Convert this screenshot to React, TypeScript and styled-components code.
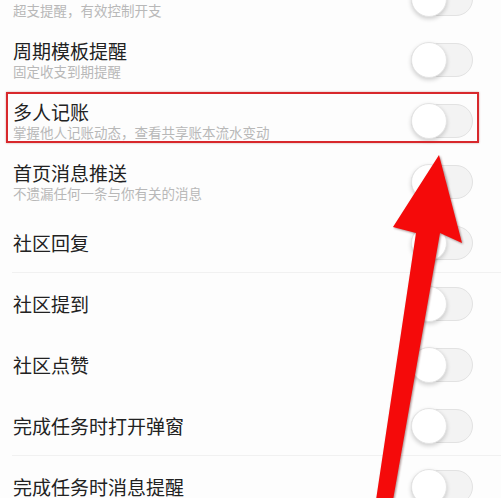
import React from 'react';
import styled, { createGlobalStyle, css } from 'styled-components';

const GlobalStyle = createGlobalStyle`
  html, body {
    margin: 0;
    padding: 0;
    background: #fdfdfd;
    overflow: hidden;
  }
  body {
    font-family: "Noto Sans CJK SC", "Noto Sans", sans-serif;
  }
`;

const Page = styled.div`
  position: relative;
  width: 501px;
  height: 498px;
  overflow: hidden;
  background: #fdfdfd;
`;

const List = styled.div`
  display: flex;
  flex-direction: column;
  margin-top: -32px;
`;

const Row = styled.div<{ $highlight?: boolean; $divider?: boolean }>`
  position: relative;
  height: 61px;
  box-sizing: border-box;
  padding: 0 28px 0 13px;
  display: flex;
  align-items: center;
  justify-content: space-between;
  ${(p) =>
    p.$divider &&
    css`
      &::before {
        content: '';
        position: absolute;
        left: 12px;
        right: 0;
        bottom: 0;
        height: 1px;
        background: #f1f1f1;
      }
    `}
  ${(p) =>
    p.$highlight &&
    css`
      &::after {
        content: '';
        position: absolute;
        left: 6px;
        right: 22px;
        top: 2px;
        bottom: 8px;
        border: 2px solid #d8282c;
        box-shadow: 0 0 2px rgba(120, 0, 0, 0.35);
      }
    `}
`;

const Texts = styled.div`
  display: flex;
  flex-direction: column;
  gap: 1.5px;
`;

const Title = styled.div`
  font-size: 19px;
  line-height: 22px;
  color: #222;
`;

const Sub = styled.div`
  font-size: 13.5px;
  line-height: 16px;
  color: #b8b8b8;
`;

const Track = styled.div`
  position: relative;
  width: 62px;
  height: 34px;
  box-sizing: border-box;
  border-radius: 17px;
  background: #f3f3f3;
  border: 1px solid #e2e2e2;
`;

const Knob = styled.div`
  position: absolute;
  left: -1px;
  top: -2px;
  width: 36px;
  height: 36px;
  border-radius: 50%;
  background: #fff;
  border: 1px solid #e4e4e4;
  box-sizing: border-box;
  box-shadow: 0 2px 4px rgba(0, 0, 0, 0.18);
`;

const Arrow = styled.svg`
  position: absolute;
  left: 0;
  top: 0;
  width: 501px;
  height: 498px;
  pointer-events: none;
  filter: drop-shadow(1px 1px 1px rgba(60, 0, 0, 0.45));
`;

const Toggle = () => (
  <Track>
    <Knob />
  </Track>
);

const items: { title: string; sub?: string; highlight?: boolean; divider?: boolean }[] = [
  { title: '预算提醒', sub: '超支提醒，有效控制开支' },
  { title: '周期模板提醒', sub: '固定收支到期提醒' },
  { title: '多人记账', sub: '掌握他人记账动态，查看共享账本流水变动', highlight: true },
  { title: '首页消息推送', sub: '不遗漏任何一条与你有关的消息' },
  { title: '社区回复', divider: true },
  { title: '社区提到' },
  { title: '社区点赞' },
  { title: '完成任务时打开弹窗', divider: true },
  { title: '完成任务时消息提醒' },
];

export default function App() {
  return (
    <Page>
      <GlobalStyle />
      <List>
        {items.map((it) => (
          <Row key={it.title} $highlight={it.highlight} $divider={it.divider}>
            <Texts>
              <Title>{it.title}</Title>
              {it.sub && <Sub>{it.sub}</Sub>}
            </Texts>
            <Toggle />
          </Row>
        ))}
      </List>
      <Arrow viewBox="0 0 501 498">
        <polygon
          points="439,155 462,243 440,233 393,500 376,500 416,233 393,227"
          fill="#f50a0a"
        />
      </Arrow>
    </Page>
  );
}
